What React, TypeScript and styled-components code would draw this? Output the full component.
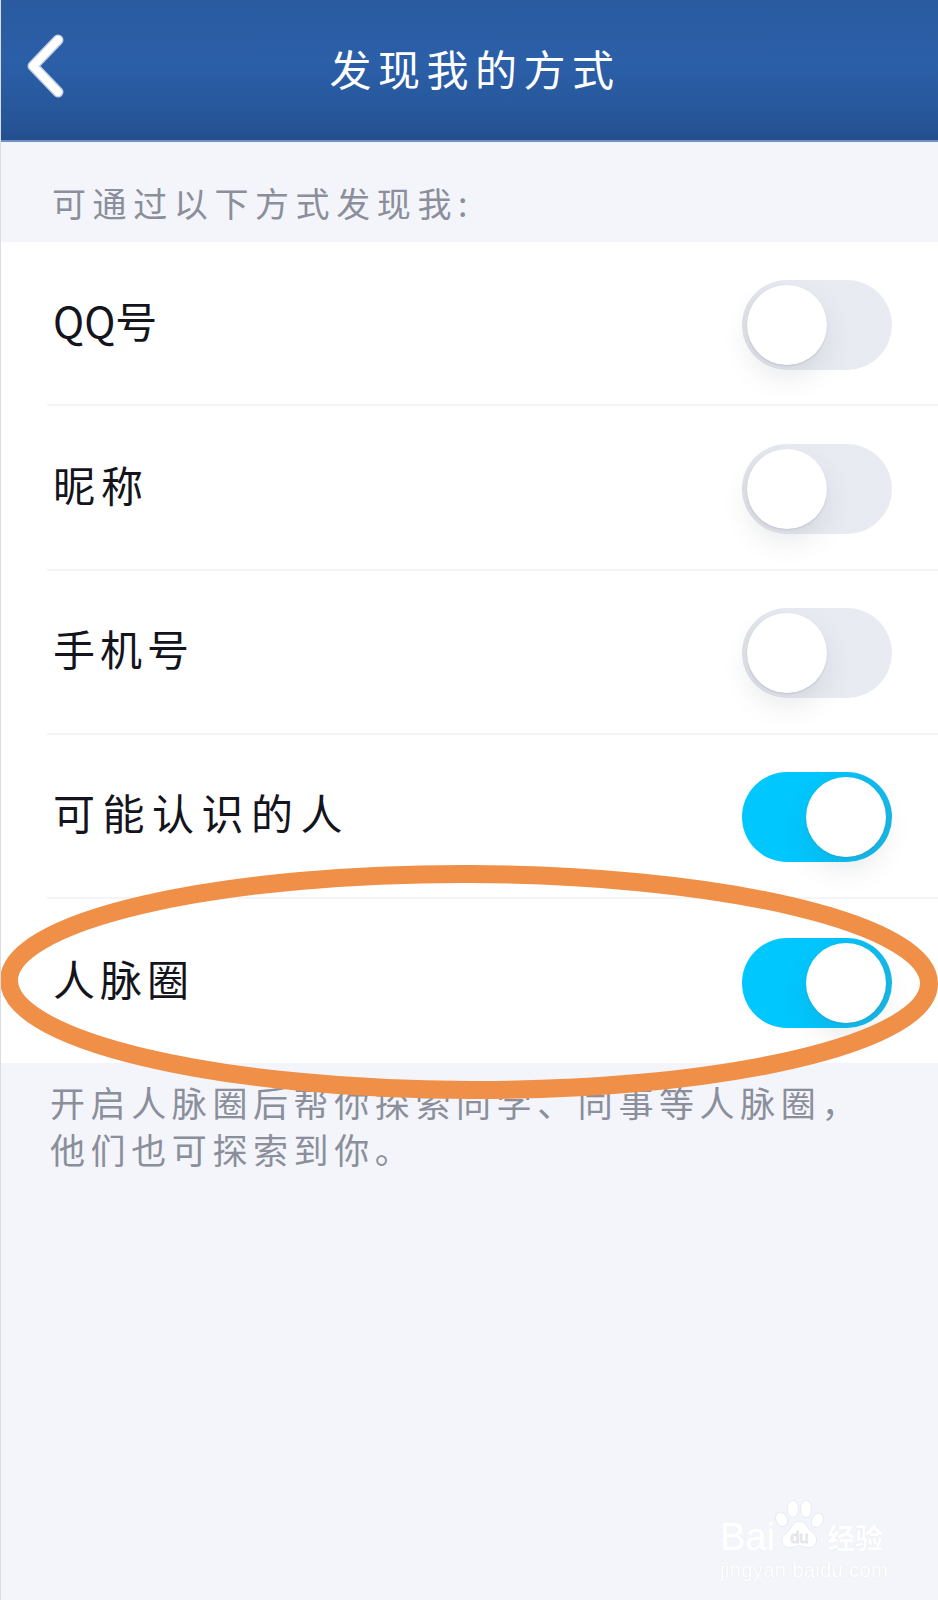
import { createGlobalStyle } from 'styled-components'
import styled from 'styled-components'

const options = [
  { label: 'QQ号', on: false, tracking: 0 },
  { label: '昵称', on: false, tracking: 6 },
  { label: '手机号', on: false, tracking: 5 },
  { label: '可能认识的人', on: true, tracking: 7.5 },
  { label: '人脉圈', on: true, tracking: 5 },
]

export default function App() {
  return (
    <Page>
      <GlobalStyle />
      <Header>
        <BackButton aria-label="返回">
          <svg width="44" height="68" viewBox="0 0 44 68" fill="none">
            <path d="M34 8 L9 34 L34 60" stroke="#c3cfe2" strokeWidth="11" strokeLinecap="round" strokeLinejoin="round" />
            <path d="M34 8 L9 34 L34 60" stroke="#fff" strokeWidth="8" strokeLinecap="round" strokeLinejoin="round" />
          </svg>
        </BackButton>
        <Title>发现我的方式</Title>
      </Header>

      <SectionLabel>可通过以下方式发现我:</SectionLabel>

      <List>
        {options.map((option) => (
          <Row key={option.label}>
            <RowLabel $tracking={option.tracking}>{option.label}</RowLabel>
            <Toggle $on={option.on}>
              <Knob $on={option.on} />
            </Toggle>
          </Row>
        ))}
      </List>

      <Note>
        开启人脉圈后帮你探索同学、同事等人脉圈，
        <br />
        他们也可探索到你。
      </Note>

      <Highlight viewBox="0 0 938 240" fill="none">
        <ellipse cx="469" cy="120" rx="460" ry="108" transform="rotate(0.2 469 120)" stroke="#f08f47" strokeWidth="18" />
      </Highlight>

      <Watermark>
        <LogoLine>
          <LogoWord>Bai</LogoWord>
          <svg width="49" height="50" viewBox="0 0 52 52" fill="#fff" stroke="#e3e5ec" strokeWidth="0.8">
            <ellipse cx="7" cy="20" rx="6" ry="8" transform="rotate(-25 7 20)" />
            <ellipse cx="19" cy="9" rx="6" ry="9" />
            <ellipse cx="33" cy="9" rx="6" ry="9" />
            <ellipse cx="45" cy="21" rx="6" ry="8" transform="rotate(25 45 21)" />
            <path d="M26 22 C33 22 34 30 41 35 C47 40 44 50 36 50 C31 50 29 48 26 48 C23 48 20 50 15 50 C7 50 5 40 11 35 C18 30 19 22 26 22 Z" />
            <text x="26" y="45" fontSize="17" textAnchor="middle" fill="#f3f5fa" stroke="#dfe1e8" strokeWidth="0.5" fontFamily="'Liberation Sans', sans-serif">du</text>
          </svg>
          <LogoChinese>经验</LogoChinese>
        </LogoLine>
        <LogoUrl>jingyan.baidu.com</LogoUrl>
      </Watermark>
    </Page>
  )
}

const GlobalStyle = createGlobalStyle`
  html, body {
    margin: 0;
    padding: 0;
    background: #f3f5fa;
  }
  * {
    box-sizing: border-box;
  }
`

const Page = styled.div`
  position: relative;
  width: 938px;
  height: 1600px;
  overflow: hidden;
  background: #f3f5fa;
  border-left: 1px solid #dcdde2;
  font-family: 'Noto Sans CJK SC', 'Noto Sans', sans-serif;
`

const Header = styled.header`
  display: grid;
  grid-template-columns: 1fr auto 1fr;
  align-items: center;
  height: 142px;
  margin-left: -1px;
  padding: 0 12px 4px 24px;
  background: linear-gradient(180deg, #2a5ba1 0%, #2b5fa8 45%, #27579b 80%, #234f8f 100%);
  border-bottom: 2px solid #6f93c4;
`

const BackButton = styled.div`
  display: flex;
  align-items: center;
  margin-top: -4px;
`

const Title = styled.h1`
  margin: 0;
  font-size: 42px;
  font-weight: 400;
  line-height: 1;
  letter-spacing: 6.5px;
  color: #fff;
`

const SectionLabel = styled.div`
  height: 100px;
  padding: 38px 0 0 51px;
  font-size: 34px;
  line-height: 46px;
  letter-spacing: 6.6px;
  color: #8b8e9b;
`

const List = styled.div`
  display: flex;
  flex-direction: column;
  padding-left: 46px;
  background: #fff;
`

const Row = styled.div`
  display: flex;
  align-items: center;
  justify-content: space-between;
  height: 164.25px;
  padding: 0 46px 0 6px;
  border-bottom: 2px solid #f4f5f8;

  &:last-child {
    border-bottom: none;
  }
`

const RowLabel = styled.span<{ $tracking: number }>`
  margin-bottom: 7px;
  font-size: 42px;
  line-height: 1;
  letter-spacing: ${({ $tracking }) => $tracking}px;
  color: #14141c;
`

const Toggle = styled.div<{ $on: boolean }>`
  position: relative;
  flex: none;
  width: 150px;
  height: 90px;
  margin-top: 3px;
  border-radius: 45px;
  background: ${({ $on }) =>
    $on ? 'linear-gradient(90deg, #00c8ff 0%, #00c6fd 50%, #14b8e8 100%)' : 'linear-gradient(90deg, #e0e2e9 0%, #e8eaf1 30%, #e9ebf3 100%)'};
`

const Knob = styled.span<{ $on: boolean }>`
  position: absolute;
  top: 5px;
  left: ${({ $on }) => ($on ? '64px' : '5px')};
  width: 80px;
  height: 80px;
  border-radius: 50%;
  background: #fff;
  box-shadow:
    0 1px 2px rgba(90, 100, 120, 0.2),
    0 14px 26px rgba(90, 95, 115, 0.12);
`

const Note = styled.p`
  margin: 0;
  padding: 15px 0 0 49px;
  font-size: 35px;
  line-height: 47px;
  letter-spacing: 5.6px;
  color: #8b8e9b;
`

const Highlight = styled.svg`
  position: absolute;
  top: 862px;
  left: -1px;
  width: 938px;
  height: 240px;
`

const Watermark = styled.div`
  position: absolute;
  left: 719px;
  top: 1500px;
  display: flex;
  flex-direction: column;
  gap: 9px;
  font-family: 'Liberation Sans', sans-serif;
  color: #fff;
  text-shadow: 0 0 1px #dfe1e8;
`

const LogoLine = styled.div`
  display: flex;
  align-items: flex-end;
`

const LogoWord = styled.span`
  margin-bottom: -6px;
  font-size: 38px;
  line-height: 38px;
  -webkit-text-stroke: 0.6px #fff;
`

const LogoChinese = styled.span`
  margin: 0 0 -3px 3px;
  font-family: 'Noto Sans CJK SC', sans-serif;
  font-size: 28px;
  line-height: 32px;
  font-weight: 700;
`

const LogoUrl = styled.span`
  font-size: 20px;
  line-height: 22px;
  letter-spacing: 0.4px;
`
